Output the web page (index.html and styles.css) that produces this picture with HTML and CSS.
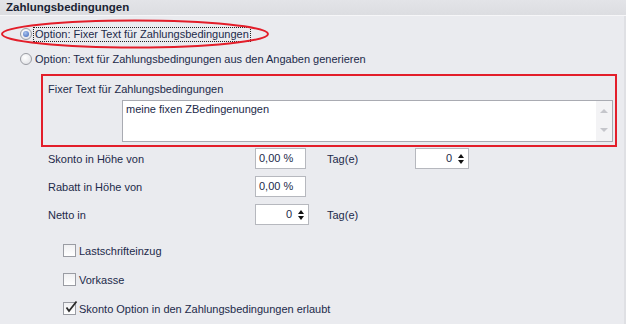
FILE: index.html
```html
<!DOCTYPE html>
<html lang="de">
<head>
  <meta charset="UTF-8">
  <title>Zahlungsbedingungen</title>
  <link rel="stylesheet" href="styles.css">
</head>
<body>
  <div class="header">Zahlungsbedingungen</div>
  <div class="content">
    <div class="options">
      <div class="option">
        <span class="radio checked"></span>
        <span class="focus">Option: Fixer Text für Zahlungsbedingungen</span>
      </div>
      <div class="option second">
        <span class="radio"></span>
        <span>Option: Text für Zahlungsbedingungen aus den Angaben generieren</span>
      </div>
      <svg class="mark-ellipse" width="272" height="32" viewBox="0 0 272 32">
        <ellipse cx="135" cy="15" rx="133" ry="13.5" fill="none" stroke="#e31e2a" stroke-width="2"/>
      </svg>
    </div>

    <div class="fixed-box">
      <div class="fixed-label">Fixer Text für Zahlungsbedingungen</div>
      <div class="memo">
        <div class="memo-text">meine fixen ZBedingenungen</div>
        <div class="memo-scroll">
          <span class="arrow-up"></span>
          <span class="arrow-down"></span>
        </div>
      </div>
    </div>

    <div class="form">
      <div class="row">
        <span class="label">Skonto in Höhe von</span>
        <span class="cell"><span class="edit">0,00 %</span></span>
        <span class="unit">Tag(e)</span>
        <span class="spin"><span class="value">0</span><span class="spin-btns"><i class="up"></i><i class="down"></i></span></span>
      </div>
      <div class="row">
        <span class="label">Rabatt in Höhe von</span>
        <span class="cell"><span class="edit">0,00 %</span></span>
      </div>
      <div class="row">
        <span class="label">Netto in</span>
        <span class="cell"><span class="spin"><span class="value">0</span><span class="spin-btns"><i class="up"></i><i class="down"></i></span></span></span>
        <span class="unit">Tag(e)</span>
      </div>
    </div>

    <div class="checks">
      <div class="check-row"><span class="box"></span>Lastschrifteinzug</div>
      <div class="check-row"><span class="box"></span>Vorkasse</div>
      <div class="check-row">
        <span class="box">
          <svg class="tick" width="14" height="14" viewBox="0 0 14 14">
            <path d="M2.5 7.5 L5 11 L12.5 1.5" fill="none" stroke="#2b2b2b" stroke-width="1.8"/>
          </svg>
        </span>
        Skonto Option in den Zahlungsbedingungen erlaubt
      </div>
    </div>
  </div>
</body>
</html>
```

FILE: styles.css
```css
body {
  margin: 0;
  width: 626px;
  height: 324px;
  overflow: hidden;
  background-color: #eaebef;
  color: #1c2a4a;
  font-family: "Liberation Sans", Arial, sans-serif;
  font-size: 11px;
}

.header {
  height: 15px;
  line-height: 14px;
  padding-left: 6px;
  background: linear-gradient(#e3e4e8, #dcdde1);
  border-bottom: 1px solid #f6f6f8;
  font-weight: bold;
  font-size: 11.5px;
  color: #1a1f33;
}

.content {
  border-right: 2px solid #dfe0e4;
  height: 308px;
}

.options {
  position: relative;
  padding-top: 11px;
}

.option {
  display: flex;
  align-items: center;
  height: 14px;
  padding-left: 20px;
}

.option.second {
  margin-top: 11px;
}

.radio {
  width: 12px;
  height: 12px;
  border: 1px solid #9a9ca3;
  border-radius: 50%;
  background: radial-gradient(circle at 40% 35%, #ffffff, #dcdde2);
  margin-right: 3px;
  box-sizing: border-box;
  position: relative;
}

.radio.checked::after {
  content: "";
  position: absolute;
  left: 2px;
  top: 2px;
  width: 6px;
  height: 6px;
  border-radius: 50%;
  background: radial-gradient(circle at 40% 35%, #a9c3ee, #3a63b8);
}

.focus {
  outline: 1px dotted #222;
  outline-offset: 0;
  padding: 0 1px;
  margin-left: -1px;
  line-height: 13px;
}

.mark-ellipse {
  position: absolute;
  left: 0;
  top: 3px;
}

.fixed-box {
  margin: 8px 0 0 41px;
  width: 572px;
  height: 69px;
  border: 2px solid #e31e2a;
}

.fixed-label {
  padding: 7px 0 0 5px;
  height: 17px;
  box-sizing: border-box;
  line-height: 12px;
}

.memo {
  display: flex;
  margin: 7px 0 0 79px;
  height: 42px;
  width: 491px;
  box-sizing: border-box;
  border: 1px solid #a9abb2;
  background-color: #fff;
}

.memo-text {
  flex: 1;
  padding: 2px 0 0 3px;
  line-height: 12px;
}

.memo-scroll {
  width: 16px;
  background-color: #f3f3f5;
  display: flex;
  flex-direction: column;
  justify-content: space-between;
  align-items: center;
  padding: 8px 0 9px;
}

.arrow-up, .arrow-down {
  width: 0;
  height: 0;
  border-left: 4px solid transparent;
  border-right: 4px solid transparent;
}

.arrow-up { border-bottom: 4px solid #c5c6cb; }
.arrow-down { border-top: 4px solid #c5c6cb; }

.form {
  padding: 0 0 0 48px;
  margin-top: 1px;
}

.row {
  display: grid;
  grid-template-columns: 207px 72px 88px auto;
  align-items: center;
  height: 21px;
  margin-bottom: 7px;
}

.edit {
  display: block;
  width: 51px;
  height: 21px;
  box-sizing: border-box;
  border: 1px solid #b6b8be;
  background-color: #fff;
  padding-left: 3px;
  line-height: 19px;
}

.spin {
  display: flex;
  width: 54px;
  height: 21px;
  box-sizing: border-box;
  border: 1px solid #b6b8be;
  background-color: #fff;
}

.value {
  flex: 1;
  text-align: right;
  line-height: 19px;
  padding-right: 2px;
}

.spin-btns {
  width: 14px;
  display: flex;
  flex-direction: column;
  justify-content: center;
  align-items: center;
  gap: 2px;
}

.spin-btns i {
  width: 0;
  height: 0;
  border-left: 3px solid transparent;
  border-right: 3px solid transparent;
}

.spin-btns .up { border-bottom: 4px solid #111; }
.spin-btns .down { border-top: 4px solid #111; }

.checks {
  padding-left: 63px;
  margin-top: 19px;
}

.check-row {
  display: flex;
  align-items: center;
  height: 13px;
  margin-bottom: 16px;
}

.box {
  width: 13px;
  height: 13px;
  box-sizing: border-box;
  border: 1px solid #9a9ca3;
  background: linear-gradient(#f0f0f2, #ffffff);
  margin-right: 3px;
  position: relative;
}

.tick {
  position: absolute;
  left: 0;
  top: -3px;
}
```
